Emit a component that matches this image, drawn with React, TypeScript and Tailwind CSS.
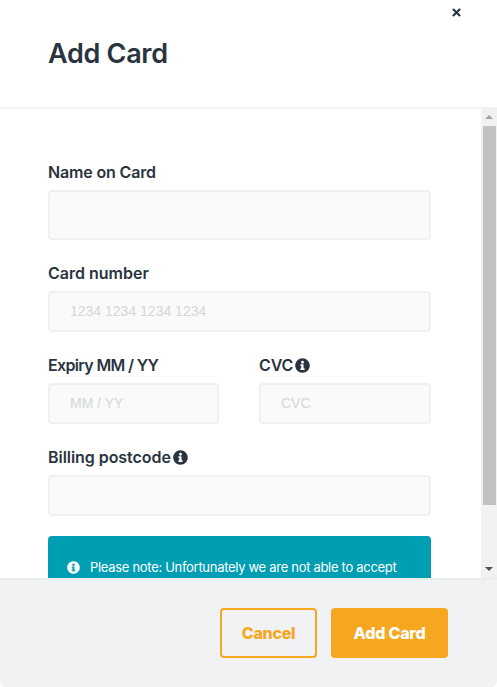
function Info({ className }: { className: string }) {
  return (
    <svg viewBox="0 0 512 512" className={className} fill="currentColor">
      <path fillRule="evenodd" d="M256 8C119 8 8 119 8 256s111 248 248 248 248-111 248-248S393 8 256 8zm0 88a50 50 0 1 1 0 100 50 50 0 0 1 0-100zm72 300c0 7-5 12-12 12H196c-7 0-12-5-12-12v-32c0-7 5-12 12-12h16v-80h-16c-7 0-12-5-12-12v-32c0-7 5-12 12-12h84c7 0 12 5 12 12v124h24c7 0 12 5 12 12v32z" />
    </svg>
  );
}

function Label({ text, info, className }: { text: string; info?: boolean; className?: string }) {
  return (
    <div className={`flex items-center gap-[2px] h-[20px] text-[16px] leading-[20px] font-semibold text-[#29343f] ${className ?? "tracking-[-0.15px]"}`}>
      <span>{text}</span>
      {info && <Info className="w-[15px] h-[15px] text-[#29343f]" />}
    </div>
  );
}

function Field({ h, placeholder }: { h: string; placeholder?: string }) {
  return (
    <div
      className={`${h} mt-[8px] flex items-center rounded-[4px] border-2 border-[#eff0f1] bg-[#fafafa] pl-[20px] font-['Liberation_Sans',sans-serif] text-[14px] text-[#d3d7db]`}
    >
      {placeholder}
    </div>
  );
}

export default function App() {
  return (
    <div className="w-[497px] h-[687px] flex flex-col bg-white font-['Inter',sans-serif] overflow-hidden">
      <header className="relative h-[107px] shrink-0 pl-[48px] pt-[38px]">
        <h1 className="text-[27px] leading-[32px] font-semibold tracking-[-0.3px] text-[#29343f]">Add Card</h1>
        <svg viewBox="0 0 10 10" className="absolute left-[452px] top-[8px] w-[9px] h-[9px] text-[#29343f]" stroke="currentColor" strokeWidth="2.4">
          <path d="M1 1l8 8M9 1l-8 8" />
        </svg>
      </header>
      <div className="h-[2px] shrink-0 bg-[#f1f2f4]" />
      <div className="flex h-[469px] shrink-0">
        <main className="w-[481px] h-[469px] overflow-hidden pl-[48px] pr-[50px] pt-[53px]">
          <Label text="Name on Card" />
          <Field h="h-[50px]" />
          <div className="mt-[23px]">
            <Label text="Card number" className="tracking-[0px]" />
            <Field h="h-[41px]" placeholder="1234 1234 1234 1234" />
          </div>
          <div className="mt-[23px] flex gap-[40px]">
            <div className="w-[171px]">
              <Label text="Expiry MM / YY" className="tracking-[-0.65px]" />
              <Field h="h-[41px]" placeholder="MM / YY" />
            </div>
            <div className="w-[172px]">
              <Label text="CVC" info />
              <Field h="h-[41px]" placeholder="CVC" />
            </div>
          </div>
          <div className="mt-[23px]">
            <Label text="Billing postcode" info className="tracking-[-0.05px]" />
            <Field h="h-[41px]" />
          </div>
          <div className="mt-[20px] h-[80px] rounded-[4px] bg-[#009eb3] pl-[19px] pt-[22px] flex items-start gap-[10px] text-[13px] leading-[19px] tracking-[-0.3px] text-white">
            <Info className="w-[13px] h-[13px] mt-[3px] shrink-0" />
            <span>Please note: Unfortunately we are not able to accept</span>
          </div>
        </main>
        <div className="w-[16px] shrink-0 flex flex-col items-center bg-[#f1f1f1]">
          <svg viewBox="0 0 8 4" className="w-[8px] h-[4px] mt-[6px] text-[#a3a3a3]" fill="currentColor"><path d="M4 0l4 4H0z" /></svg>
          <div className="mt-[7px] w-[13px] h-[379px] bg-[#c1c1c1]" />
          <div className="flex-1" />
          <svg viewBox="0 0 8 4" className="w-[8px] h-[4px] mb-[7px] text-[#505050]" fill="currentColor"><path d="M0 0h8L4 4z" /></svg>
        </div>
      </div>
      <footer className="flex-1 bg-[#f1f2f4] border-t-2 border-[#ebecee] rounded-b-[6px] flex justify-end items-start pt-[28px] pr-[49px] gap-[14px]">
        <button className="w-[97px] h-[50px] rounded-[4px] border-2 border-[#f6a71f] text-[16px] font-extrabold tracking-[-0.3px] text-[#f6a71f]">Cancel</button>
        <button className="w-[117px] h-[50px] rounded-[4px] bg-[#f6a71f] text-[16px] font-extrabold tracking-[-0.2px] text-white">Add Card</button>
      </footer>
    </div>
  );
}
